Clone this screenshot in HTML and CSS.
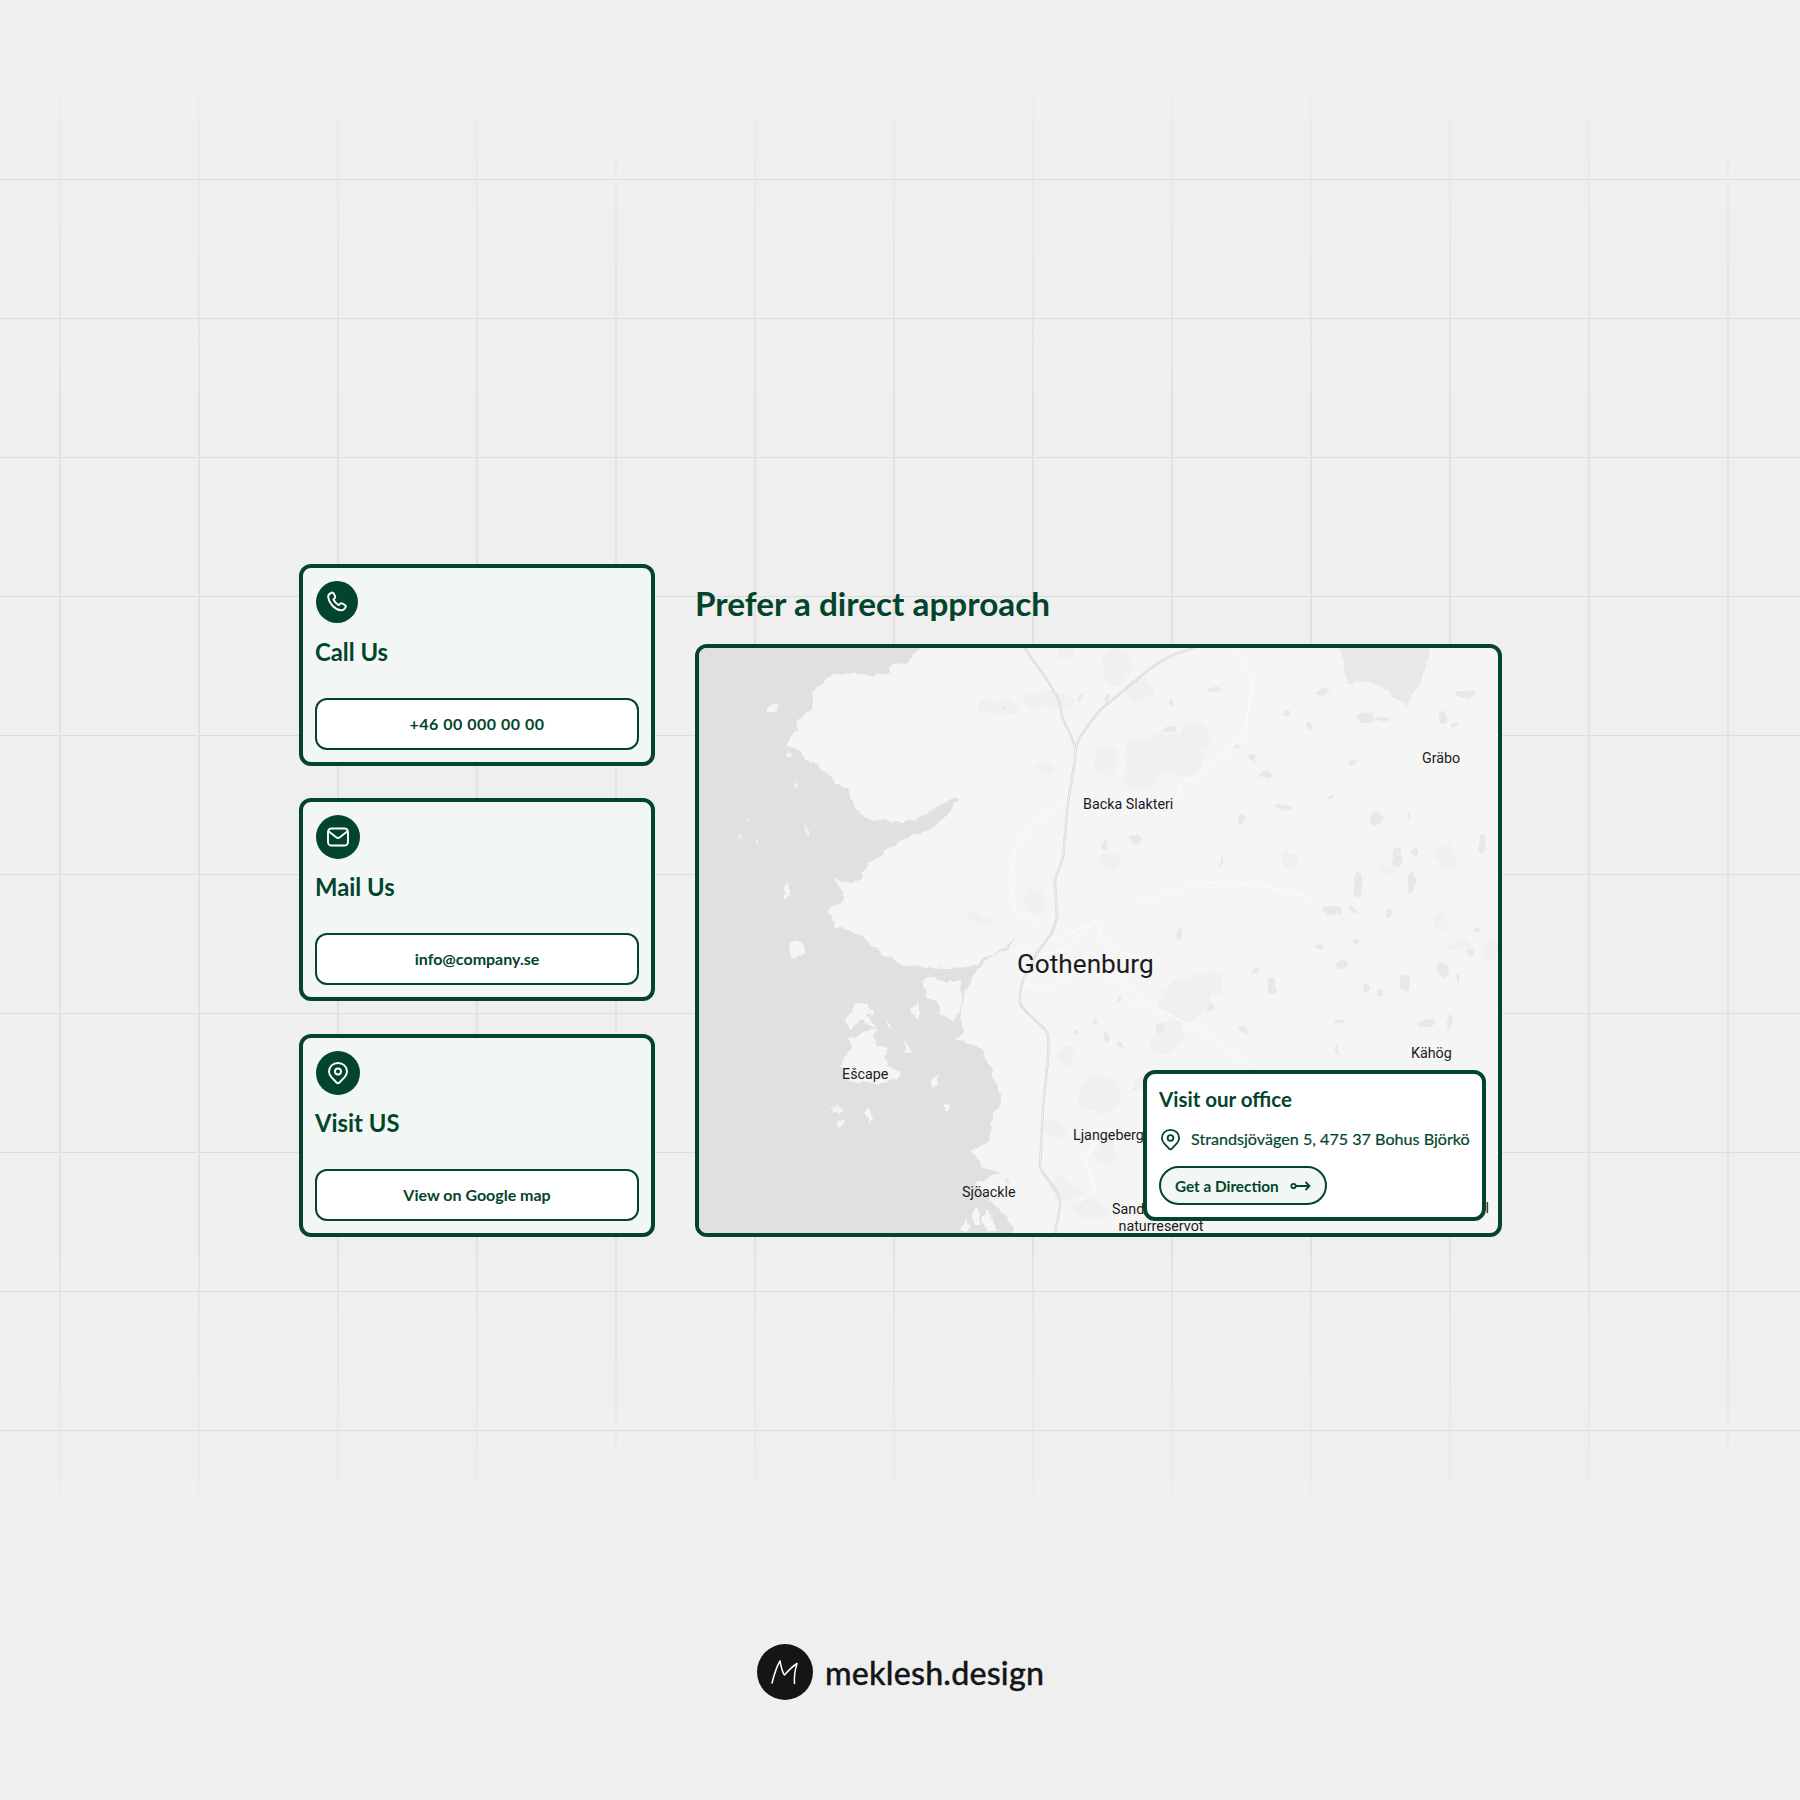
FILE: index.html
```html
<!DOCTYPE html>
<html lang="en">
<head>
<meta charset="utf-8">
<title>Prefer a direct approach</title>
<link rel="stylesheet" href="styles.css">
</head>
<body>
<div class="page">
  <div class="grid-h"></div>
  <div class="grid-v"></div>
  <main class="contact">
    <section class="cards">
      <article class="card">
        <span class="badge badge-sm">
          <svg class="ic" viewBox="0 0 24 24"><path d="M6.200 2.800c.9-.5 2-.2 2.500.7l1.300 2.500c.4.8.3 1.700-.3 2.300l-1.300 1.200c1 2.200 2.900 4.300 5.300 5.600l1.400-1.300c.6-.6 1.500-.7 2.300-.3l2.300 1.300c1 .5 1.300 1.700.8 2.600-1 2-2.800 3.200-4.900 2.900C9.500 19.300 4.200 13.500 3.200 7.300c-.3-1.900 1.100-3.600 3-4.500z"/></svg>
        </span>
        <h2 class="card-title">Call Us</h2>
        <a class="card-btn card-btn-num">+46 00 000 00 00</a>
      </article>
      <article class="card">
        <span class="badge">
          <svg class="ic" viewBox="0 0 24 24"><rect x="2" y="3.500" width="20" height="17" rx="3.500"/><path d="M2.800 6.500l7.400 5.800c1.100.8 2.500.8 3.600 0l7.400-5.800"/></svg>
        </span>
        <h2 class="card-title">Mail Us</h2>
        <a class="card-btn">info@company.se</a>
      </article>
      <article class="card">
        <span class="badge">
          <svg class="ic" viewBox="0 0 24 24"><path d="M12 22.200c-.6 0-1.100-.3-1.500-.7l-4.900-5.200C3.900 14.500 3 12.500 3 10.400 3 5.500 7 2 12 2s9 3.500 9 8.400c0 2.100-.9 4.100-2.600 5.900l-4.900 5.200c-.4.400-.9.700-1.500.7z"/><circle cx="12" cy="10.500" r="3"/></svg>
        </span>
        <h2 class="card-title">Visit US</h2>
        <a class="card-btn">View on Google map</a>
      </article>
    </section>
    <section class="direct">
      <h1 class="direct-title">Prefer a direct approach</h1>
      <div class="map">
        <svg class="map-art" viewBox="699 648 799 585" preserveAspectRatio="none">
          <defs>
            <filter id="rough" filterUnits="userSpaceOnUse" x="650" y="600" width="900" height="680">
              <feTurbulence type="fractalNoise" baseFrequency=".09" numOctaves="3" seed="4"/>
              <feDisplacementMap in="SourceGraphic" scale="8" xChannelSelector="R" yChannelSelector="G"/>
            </filter>
            <filter id="rougher" filterUnits="userSpaceOnUse" x="650" y="600" width="900" height="680">
              <feTurbulence type="fractalNoise" baseFrequency=".05" numOctaves="3" seed="9"/>
              <feDisplacementMap in="SourceGraphic" scale="16" xChannelSelector="R" yChannelSelector="G"/>
            </filter>
          </defs>
          <g class="urban" filter="url(#rougher)">
            <ellipse cx="1165" cy="755" rx="40" ry="22"/><ellipse cx="1195" cy="738" rx="14" ry="14"/>
            <ellipse cx="1140" cy="775" rx="16" ry="14"/><ellipse cx="1140" cy="690" rx="16" ry="11"/>
            <ellipse cx="1115" cy="668" rx="14" ry="18"/><ellipse cx="1050" cy="700" rx="20" ry="10"/>
            <ellipse cx="1065" cy="655" rx="8" ry="6"/><ellipse cx="1000" cy="708" rx="22" ry="8"/>
            <ellipse cx="1035" cy="700" rx="10" ry="6"/><ellipse cx="1105" cy="760" rx="12" ry="15"/>
            <ellipse cx="1045" cy="768" rx="12" ry="6"/><ellipse cx="1110" cy="860" rx="11" ry="10"/>
            <ellipse cx="1035" cy="900" rx="8" ry="12"/><ellipse cx="980" cy="920" rx="12" ry="6"/>
            <ellipse cx="1185" cy="1000" rx="26" ry="20"/><ellipse cx="1205" cy="985" rx="20" ry="12"/>
            <ellipse cx="1165" cy="1040" rx="18" ry="12"/><ellipse cx="1100" cy="1095" rx="22" ry="18"/>
            <ellipse cx="1065" cy="1055" rx="8" ry="12"/><ellipse cx="1055" cy="1130" rx="14" ry="8"/>
            <ellipse cx="1065" cy="1190" rx="14" ry="14"/><ellipse cx="1105" cy="1150" rx="10" ry="14"/>
            <ellipse cx="1090" cy="1210" rx="14" ry="10"/><ellipse cx="1175" cy="1030" rx="10" ry="8"/>
            <ellipse cx="1190" cy="1100" rx="14" ry="14"/><ellipse cx="1150" cy="1085" rx="16" ry="12"/>
            <ellipse cx="1290" cy="858" rx="8" ry="10"/><ellipse cx="1440" cy="920" rx="8" ry="8"/>
            <ellipse cx="1445" cy="855" rx="10" ry="12"/><ellipse cx="1490" cy="950" rx="8" ry="12"/>
            <ellipse cx="1460" cy="945" rx="12" ry="6"/><ellipse cx="1390" cy="870" rx="8" ry="6"/>
          </g>
          <g class="lake" filter="url(#rough)">
            <path d="M1340 640h92l-5 27-10 20-12 22-12-16-30-13-16 3-4-23z"/>
            <ellipse cx="1322" cy="692" rx="7" ry="4"/><ellipse cx="1287" cy="713" rx="4" ry="3"/>
            <ellipse cx="1310" cy="727" rx="2" ry="4"/><ellipse cx="1367" cy="718" rx="9" ry="5"/>
            <ellipse cx="1383" cy="718" rx="5" ry="3"/><ellipse cx="1442" cy="717" rx="4" ry="7"/>
            <ellipse cx="1466" cy="694" rx="10" ry="4"/><ellipse cx="1455" cy="725" rx="4" ry="3"/>
            <ellipse cx="1252" cy="757" rx="3" ry="4"/><ellipse cx="1265" cy="775" rx="6" ry="3"/>
            <ellipse cx="1353" cy="763" rx="5" ry="2"/><ellipse cx="1330" cy="797" rx="3" ry="2"/>
            <ellipse cx="1285" cy="807" rx="9" ry="3"/><ellipse cx="1242" cy="818" rx="3" ry="6"/>
            <ellipse cx="1377" cy="818" rx="6" ry="7"/><ellipse cx="1410" cy="815" rx="2" ry="3"/>
            <ellipse cx="1397" cy="858" rx="6" ry="10"/><ellipse cx="1415" cy="852" rx="3" ry="5"/>
            <ellipse cx="1482" cy="843" rx="4" ry="8"/><ellipse cx="1222" cy="862" rx="2" ry="4"/>
            <ellipse cx="1358" cy="885" rx="4" ry="12"/><ellipse cx="1412" cy="883" rx="5" ry="11"/>
            <ellipse cx="1332" cy="910" rx="10" ry="4"/><ellipse cx="1353" cy="910" rx="3" ry="3"/>
            <ellipse cx="1388" cy="913" rx="2" ry="4"/><ellipse cx="1180" cy="935" rx="4" ry="6"/>
            <ellipse cx="1477" cy="930" rx="4" ry="3"/><ellipse cx="1319" cy="946" rx="4" ry="2"/>
            <ellipse cx="1357" cy="942" rx="4" ry="2"/><ellipse cx="1342" cy="963" rx="7" ry="5"/>
            <ellipse cx="1257" cy="970" rx="5" ry="2"/><ellipse cx="1272" cy="985" rx="5" ry="8"/>
            <ellipse cx="1210" cy="1007" rx="5" ry="4"/><ellipse cx="1470" cy="952" rx="3" ry="4"/>
            <ellipse cx="1443" cy="970" rx="6" ry="8"/><ellipse cx="1405" cy="983" rx="6" ry="8"/>
            <ellipse cx="1458" cy="978" rx="2" ry="3"/><ellipse cx="1367" cy="987" rx="2" ry="5"/>
            <ellipse cx="1380" cy="993" rx="3" ry="4"/><ellipse cx="1428" cy="1023" rx="8" ry="4"/>
            <ellipse cx="1450" cy="1022" rx="3" ry="6"/><ellipse cx="1340" cy="1022" rx="5" ry="2"/>
            <ellipse cx="1338" cy="1050" rx="2" ry="5"/><ellipse cx="1160" cy="1027" rx="4" ry="4"/>
            <ellipse cx="1243" cy="1030" rx="3" ry="3"/><ellipse cx="1118" cy="1000" rx="2" ry="3"/>
            <ellipse cx="1170" cy="730" rx="7" ry="3"/><ellipse cx="1172" cy="702" rx="2" ry="5"/>
            <ellipse cx="1215" cy="690" rx="7" ry="3"/><ellipse cx="1254" cy="763" rx="2" ry="2"/>
            <ellipse cx="1236" cy="746" rx="3" ry="2"/><ellipse cx="1106" cy="698" rx="3" ry="5"/>
            <ellipse cx="1080" cy="700" rx="2" ry="3"/><ellipse cx="1005" cy="710" rx="3" ry="2"/>
            <ellipse cx="1135" cy="840" rx="5" ry="4"/><ellipse cx="1105" cy="845" rx="2" ry="5"/>
            <ellipse cx="1105" cy="1038" rx="3" ry="6"/><ellipse cx="1075" cy="1033" rx="3" ry="3"/>
            <ellipse cx="1095" cy="1022" rx="3" ry="2"/><ellipse cx="1120" cy="1045" rx="2" ry="4"/>
            <ellipse cx="1135" cy="1090" rx="3" ry="2"/><ellipse cx="1008" cy="1180" rx="2" ry="3"/>
          </g>
          <g filter="url(#rough)">
            <path class="water" d="M690 640H925L917 655 890 667V675L833 673 820 685 812 695 815 707 798 720 797 730 785 745 800 750 805 758 823 770 847 790 852 805 863 815 878 820 903 823 930 812 953 798 960 797 953 805 933 830 907 837 887 850 873 863 863 870V877L853 885 833 877 845 898 827 913 837 927 863 937 878 950 897 963 917 967 947 968 973 967 1017 937 1010 945 990 957 973 975 963 997 960 1017 963 1030 957 1040 983 1050 990 1067 995 1083 1002 1100 993 1120 990 1140 973 1152 983 1167 998 1173 977 1183 990 1200 1007 1217 1020 1245H690Z"/>
            <g class="land">
              <path d="M840 1068l12-22-4-8 8 2 8-8 14-4-4 10 4 8 10 0-4 12 4 8 12 4-2 10-14 3-24 0-12-4-4-6z"/>
              <path d="M848 1012l8-8 12-2 0 12-10 10-8 4-4-8z"/><path d="M862 1014l8 6 6 8-10-4z"/>
              <path d="M790 943l12-2 1 14-10 2-4-6z"/><path d="M767 708l12-4 1 4-8 6-5-1z"/>
              <path d="M923 980l12-4 8 6-6 18-8 0-6-14z"/><path d="M938 984l24-4-2 30-6 12-14-6-4-16z"/>
              <path d="M783 888l5-6 2 14-6 2z"/><path d="M830 1108l6 0 4 6-6-2z"/>
              <path d="M864 1112l6-4 4 10-4 4z"/><path d="M838 1122l6-2 0 4-6 2z"/><path d="M945 1104l6-2-2 8-4 0z"/>
              <path d="M972 1215l4-10 4 12 0 10-6 0z"/><path d="M982 1220l4-12 6 8 2 14-8 0z"/>
              <path d="M960 1230l6-10 4 6-2 6z"/>
              <path d="M788 750l3 6-5 2z"/><path d="M795 780l4 6-3 2z"/><path d="M805 825l4 8-2 2z"/>
              <path d="M736 835l6 2-4 2z"/><path d="M746 818l4 4-3 0z"/><path d="M755 840l4 2-2 3z"/>
              <path d="M910 1010l6-8 4 10-2 8z"/><path d="M884 1018l6 8-2 4z"/>
              <path d="M906 1042l4 8-6 2z"/><path d="M868 1008l5 6-4 4z"/>
              <path d="M932 1080l4-6 2 12-6 2z"/><path d="M834 1104l8 6-4 2z"/>
            </g>
          </g>
          <g class="minor">
            <path d="M1237 648l16 32-8 55-38 35-27 15-5 15"/>
            <path d="M1130 905l70-23 60 3 50 12"/>
            <path d="M1130 1000l20 5 50 25 50 35"/>
            <path d="M1063 805l-33 20-15 25-5 30 5 30 25 15"/>
            <path d="M1010 952l20-5 30-10 35-15 12 25 30 10M1020 985l30 2 30-18 40 10 20 18"/>
            <path d="M1095 920l-30 30-30 5-15 20 15 15"/>
            <path d="M1100 1135l-15 25 10 30-20 15"/>
          </g>
          <g class="motorway">
            <path class="casing" d="M1025 648C1032 662 1048 675 1060 703L1062 717C1066 728 1075 738 1075 750V760L1068 803 1063 857C1060 870 1055 875 1055 882L1057 917C1056 925 1052 930 1052 933L1037 953 1023 980C1020 990 1019 998 1020 1003 1024 1015 1044 1024 1047 1033 1050 1042 1048 1050 1048 1060L1043 1107 1040 1167C1045 1180 1058 1188 1060 1200 1061 1212 1056 1222 1055 1233"/>
            <path class="casing" d="M1075 755C1075 748 1078 742 1080 737 1085 730 1092 720 1100 710L1140 677C1150 668 1162 660 1173 655 1180 652 1188 650 1195 648"/>
            <path class="core" d="M1025 648C1032 662 1048 675 1060 703L1062 717C1066 728 1075 738 1075 750V760L1068 803 1063 857C1060 870 1055 875 1055 882L1057 917C1056 925 1052 930 1052 933L1037 953 1023 980C1020 990 1019 998 1020 1003 1024 1015 1044 1024 1047 1033 1050 1042 1048 1050 1048 1060L1043 1107 1040 1167C1045 1180 1058 1188 1060 1200 1061 1212 1056 1222 1055 1233"/>
            <path class="core" d="M1075 755C1075 748 1078 742 1080 737 1085 730 1092 720 1100 710L1140 677C1150 668 1162 660 1173 655 1180 652 1188 650 1195 648"/>
          </g>
          <text class="lbl" x="1422" y="763">Gräbo</text>
          <text class="lbl" x="1083" y="809">Backa Slakteri</text>
          <text class="lbl city" x="1017" y="973">Gothenburg</text>
          <text class="lbl" x="1411" y="1058">Kähög</text>
          <text class="lbl" x="842" y="1079">Ešcape</text>
          <text class="lbl" x="1073" y="1140">Ljangeberg</text>
          <text class="lbl" x="962" y="1197">Sjöackle</text>
          <text class="lbl" x="1112" y="1214">Sandsjöbacka</text>
          <text class="lbl mid" x="1161" y="1231">naturreservot</text>
          <text class="lbl end" x="1489" y="1213">Hällesåkerl</text>
        </svg>
        <aside class="office">
          <h3 class="office-title">Visit our office</h3>
          <p class="office-addr">
            <svg class="ic-addr" viewBox="0 0 24 24"><path d="M12 22.200c-.6 0-1.100-.3-1.500-.7l-4.900-5.200C3.900 14.500 3 12.500 3 10.400 3 5.500 7 2 12 2s9 3.500 9 8.400c0 2.100-.9 4.100-2.600 5.900l-4.900 5.200c-.4.400-.9.700-1.500.7z"/><circle cx="12" cy="10.500" r="3"/></svg>
            <span>Strandsjövägen 5, 475 37 Bohus Björkö</span>
          </p>
          <a class="dir-btn">Get a Direction
            <svg class="ic-arrow" viewBox="0 0 20 10"><circle cx="3" cy="5" r="2.200"/><path d="M5.500 5H19M15.500 1.500 19 5l-3.500 3.500"/></svg>
          </a>
        </aside>
      </div>
    </section>
  </main>
  <footer class="brand">
    <span class="brand-mark">
      <svg viewBox="0 0 56 56"><path d="M15 39C17 31 20 22 23 17 24 22 25 28 27.500 31 31 27 36 22 40 19.500 38 26 37 33 37.500 39.500"/></svg>
    </span>
    <span class="brand-name">meklesh.design</span>
  </footer>
</div>
</body>
</html>
```
FILE: styles.css
```css
* { box-sizing: border-box; margin: 0; padding: 0; }
html, body { width: 1800px; height: 1800px; overflow: hidden; }
body { background: #efefef; font-family: "Lato", "Noto Sans", sans-serif; color: #03452c; }
.page { position: relative; width: 1800px; height: 1800px; padding: 564px 0 0 299px; }
.grid-h {
  position: absolute; left: 0; top: 179px; width: 1800px; height: 1252px;
  background: linear-gradient(#dcdcdc 0 1px, transparent 1px) 0 0 / 100% 139px;
}
.grid-v {
  position: absolute; left: 0; top: 0; width: 1800px; height: 1800px;
  background: linear-gradient(90deg, #e2e2e2 0 2px, transparent 2px) 59px 0 / 139px 100%;
  -webkit-mask-image: linear-gradient(transparent 40px, #000 400px, #000 1250px, transparent 1540px);
  mask-image: linear-gradient(transparent 40px, #000 400px, #000 1250px, transparent 1540px);
}
.contact { position: relative; display: flex; gap: 40px; width: 1203px; }
.cards { display: flex; flex-direction: column; gap: 32px; width: 356px; }
.card {
  display: flex; flex-direction: column; align-items: flex-start; height: 203px;
  border: 4px solid #03452c; border-radius: 12px; background: #f2f6f5; padding: 13px 12px 12px;
}
.card:first-child { height: 202px; }
.card:last-child { margin-top: 1px; }
.badge, .badge-sm {
  display: flex; align-items: center; justify-content: center; margin-left: 1px;
  width: 44px; height: 44px; border-radius: 50%; background: #03452c;
}
.badge-sm { width: 42px; height: 42px; }
.ic { width: 24px; height: 24px; fill: none; stroke: #fff; stroke-width: 1.900; stroke-linecap: round; stroke-linejoin: round; }
.card-title { font-size: 23.800px; line-height: 30px; font-weight: 700; margin-top: 13px; }
.badge-sm + .card-title { margin-top: 13.500px; }
.card-btn {
  display: flex; align-items: center; justify-content: center; width: 324px; height: 52px; margin-top: auto;
  border: 2px solid #03452c; border-radius: 12px; background: #fff;
  font-size: 16px; font-weight: 700; padding-bottom: 2px;
}
.card-btn-num { letter-spacing: .5px; }
.direct { display: flex; flex-direction: column; width: 807px; }
.direct-title { font-size: 33.300px; line-height: 44px; font-weight: 700; height: 80px; padding-top: 17px; }
.map {
  position: relative; width: 807px; height: 593px; border: 4px solid #03452c; border-radius: 12px;
  background: #f5f5f5; overflow: hidden;
}
.map-art { display: block; width: 799px; height: 585px; }
.urban ellipse { fill: #f0f0f0; }
.lake path, .lake ellipse { fill: #e8e8e8; }
.water { fill: #e0e0e0; }
.land path { fill: #f5f5f5; }
.minor path { fill: none; stroke: #fbfbfb; stroke-width: 1.200; }
.casing { fill: none; stroke: #d6d6d6; stroke-width: 2.400; }
.core { fill: none; stroke: #f8f8f8; stroke-width: .8; }
.lbl { font-family: "Roboto", sans-serif; font-size: 14.300px; fill: #1b1b1b; }
.lbl.city { font-size: 26.200px; }
.lbl.mid { text-anchor: middle; }
.lbl.end { text-anchor: end; }
.office {
  position: absolute; right: 12px; bottom: 12px; width: 343px; height: 151px;
  border: 4px solid #03452c; border-radius: 12px; background: #fff; padding: 12px;
  display: flex; flex-direction: column; align-items: flex-start;
}
.office-title { font-size: 20.500px; line-height: 26px; font-weight: 700; }
.office-addr { display: flex; align-items: center; gap: 9px; margin-top: 15px; font-size: 16.150px; line-height: 24px; white-space: nowrap; -webkit-text-stroke: .2px #03452c; }
.ic-addr { width: 23px; height: 23px; fill: none; stroke: #03452c; stroke-width: 1.900; stroke-linejoin: round; }
.dir-btn {
  display: inline-flex; align-items: center; gap: 11px; height: 39px; margin-top: 15px; padding: 0 14px;
  border: 2px solid #03452c; border-radius: 20px; background: #f2f6f5;
  font-size: 15.300px; font-weight: 700;
}
.ic-arrow { width: 21px; height: 10px; fill: none; stroke: #03452c; stroke-width: 1.800; stroke-linecap: round; stroke-linejoin: round; }
.brand { position: absolute; left: 757px; top: 1644px; display: flex; align-items: center; gap: 12px; color: #141516; }
.brand-mark { display: block; width: 56px; height: 56px; border-radius: 50%; background: #141516; }
.brand-mark svg { display: block; width: 56px; height: 56px; fill: none; stroke: #fff; stroke-width: 1.500; stroke-linecap: round; stroke-linejoin: round; }
.brand-name { font-size: 32.200px; font-weight: 500; letter-spacing: .2px; -webkit-text-stroke: .35px #141516; }
```
